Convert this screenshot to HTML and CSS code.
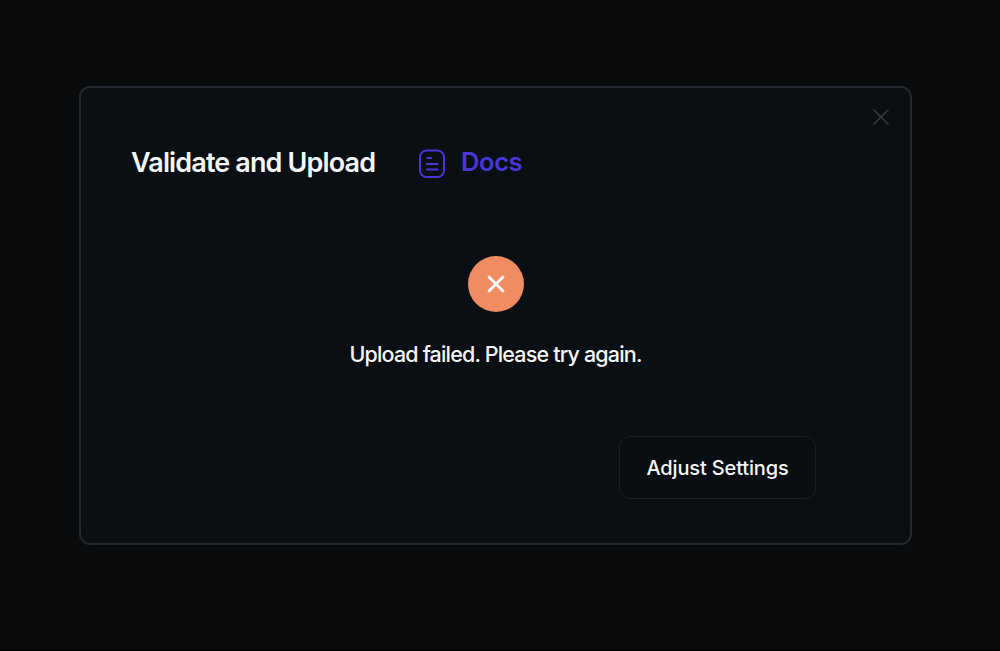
FILE: index.html
```
<!DOCTYPE html>
<html lang="en">
<head>
  <meta charset="UTF-8" />
  <meta name="viewport" content="width=device-width, initial-scale=1.0"/>
  <title>Validate and Upload</title>
  <link rel="stylesheet" href="styles.css">
</head>
<body>

<div class="modal" role="dialog" aria-labelledby="modalTitle">
  <button class="close-btn" aria-label="Close">
    <svg width="16" height="16" viewBox="0 0 16 16"><path d="M1 1l14 14M15 1L1 15"/></svg>
  </button>

  <div class="modal-header">
    <h1 id="modalTitle">Validate and Upload</h1>
    <a class="docs-link" href="#">
      <svg width="26" height="29" viewBox="0 0 26 29">
        <rect x="1" y="1.5" width="24" height="26.5" rx="6.5"/>
        <path d="M8 9h4M8 15h10.5M8 20.5h10.5"/>
      </svg>
      <span>Docs</span>
    </a>
  </div>

  <div class="status">
    <div class="status-icon">
      <svg width="18" height="18" viewBox="0 0 18 18"><path d="M2 2l14 14M16 2L2 16"/></svg>
    </div>
    <p>Upload failed. Please try again.</p>
  </div>

  <div class="modal-footer">
    <button class="btn">Adjust Settings</button>
  </div>
</div>

</body>
</html>
```
FILE: styles.css
```
* {
  box-sizing: border-box;
}

body {
  font-family: 'Inter', sans-serif;
  margin: 0;
  height: 651px;
  padding: 86px 0 0 79px;
  background: #090b0d;
  border-bottom: 1px solid #000;
  color: #f5f6f7;
}

svg {
  display: block;
  fill: none;
  stroke: currentColor;
  stroke-linecap: round;
}

button {
  font-family: inherit;
  cursor: pointer;
}

.modal {
  position: relative;
  width: 833px;
  height: 459px;
  padding: 56px 94px 0 50px;
  background: #0a0f13;
  border: 2px solid #23292e;
  border-radius: 11px;
}

.close-btn {
  position: absolute;
  top: 21px;
  right: 21px;
  padding: 0;
  background: none;
  border: none;
  color: #343a3f;
}

.close-btn svg {
  stroke-width: 1.7;
}

.modal-header {
  display: flex;
  align-items: center;
  height: 38px;
}

.modal-header h1 {
  width: 288px;
  margin: 0;
  padding-bottom: 1px;
  font-size: 27px;
  font-weight: 600;
  letter-spacing: -0.87px;
  white-space: nowrap;
}

.docs-link {
  display: flex;
  align-items: center;
  gap: 16px;
  color: #4936d8;
  font-size: 25.5px;
  font-weight: 600;
  letter-spacing: -0.4px;
  text-decoration: none;
}

.docs-link svg {
  stroke-width: 2;
}

.docs-link span {
  padding-bottom: 3px;
}

.status {
  display: flex;
  flex-direction: column;
  align-items: center;
  margin: 74px -44px 0 0;
}

.status-icon {
  display: flex;
  align-items: center;
  justify-content: center;
  width: 56px;
  height: 56px;
  background: #f08b62;
  border-radius: 50%;
  color: #fff;
}

.status-icon svg {
  stroke-width: 2.8;
}

.status p {
  margin: 27px 0 0;
  font-size: 21.5px;
  font-weight: 500;
  line-height: 30px;
  letter-spacing: -0.83px;
  white-space: nowrap;
}

.modal-footer {
  display: flex;
  justify-content: flex-end;
  margin-top: 67px;
}

.btn {
  width: 197px;
  height: 63px;
  padding: 0;
  background: #090e12;
  border: 1px solid #1b2024;
  border-radius: 11px;
  color: #f5f6f7;
  font-size: 20px;
  font-weight: 500;
  letter-spacing: -0.15px;
  white-space: nowrap;
}
```
